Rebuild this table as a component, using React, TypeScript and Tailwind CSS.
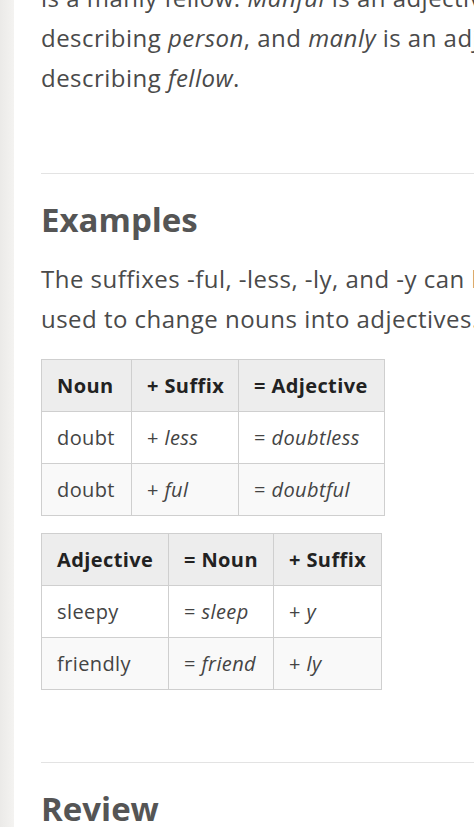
import React from "react";

type Cell = { pre: string; word: string; italic?: boolean };

const tableOne = {
  width: "w-[343px]",
  head: ["Noun", "+ Suffix", "= Adjective"],
  cols: ["w-[90px]", "w-[107px]", "w-[146px]"],
  rows: [
    [{ pre: "", word: "doubt" }, { pre: "+ ", word: "less", italic: true }, { pre: "= ", word: "doubtless", italic: true }],
    [{ pre: "", word: "doubt" }, { pre: "+ ", word: "ful", italic: true }, { pre: "= ", word: "doubtful", italic: true }],
  ] as Cell[][],
};

const tableTwo = {
  width: "w-[340px]",
  head: ["Adjective", "= Noun", "+ Suffix"],
  cols: ["w-[127px]", "w-[105px]", "w-[108px]"],
  rows: [
    [{ pre: "", word: "sleepy" }, { pre: "= ", word: "sleep", italic: true }, { pre: "+ ", word: "y", italic: true }],
    [{ pre: "", word: "friendly" }, { pre: "= ", word: "friend", italic: true }, { pre: "+ ", word: "ly", italic: true }],
  ] as Cell[][],
};

function WordTable({ table }: { table: typeof tableOne }) {
  return (
    <table
      className={`${table.width} table-fixed border-collapse border border-[#cfcfcf] text-[20px] tracking-[0.02em]`}
    >
      <thead>
        <tr className="bg-[#ededed]">
          {table.head.map((h, i) => (
            <th
              key={h}
              className={`${table.cols[i]} h-[52px] border border-[#cfcfcf] px-[15px] text-left font-bold whitespace-nowrap text-[#222]`}
            >
              {h}
            </th>
          ))}
        </tr>
      </thead>
      <tbody>
        {table.rows.map((row, r) => (
          <tr key={r} className={r % 2 === 1 ? "bg-[#f9f9f9]" : "bg-white"}>
            {row.map((c, i) => (
              <td
                key={i}
                className="h-[52px] border border-[#cfcfcf] px-[15px] whitespace-nowrap text-[#444]"
              >
                {c.pre}
                {c.italic ? <em>{c.word}</em> : c.word}
              </td>
            ))}
          </tr>
        ))}
      </tbody>
    </table>
  );
}

export default function App() {
  return (
    <div
      className="flex h-[827px] w-[474px] overflow-hidden bg-white"
      style={{ fontFamily: '"Open Sans", "Liberation Sans", sans-serif' }}
    >
      {/* page gutter */}
      <div className="w-[14px] shrink-0 bg-gradient-to-r from-[#ebeae8] to-[#f4f3f1]" />

      <div className="min-w-0 flex-1 whitespace-nowrap pl-[27px] text-[24px] leading-[40px] tracking-[0.02em] text-[#4a4a4a]">
        <p className="-mt-[22px]">
          is a manly fellow. <em>Manful</em> is an adjective
          <br />
          describing <em>person</em>, and <em>manly</em> is an adjective
          <br />
          describing <em>fellow</em>.
        </p>

        <hr className="mt-[75px] border-t border-[#e3e3e3]" />

        <h2 className="mt-[24px] text-[33px] font-bold leading-[44px] tracking-normal text-[#555]">
          Examples
        </h2>

        <p className="mt-[17px]">
          The suffixes -ful, -less, -ly, and -y can be
          <br />
          used to change nouns into adjectives.
        </p>

        <div className="mt-[20px]">
          <WordTable table={tableOne} />
        </div>
        <div className="mt-[17px]">
          <WordTable table={tableTwo} />
        </div>

        <hr className="mt-[72px] border-t border-[#e3e3e3]" />

        <h2 className="mt-[24px] text-[33px] font-bold leading-[44px] tracking-normal text-[#555]">
          Review
        </h2>
      </div>
    </div>
  );
}
